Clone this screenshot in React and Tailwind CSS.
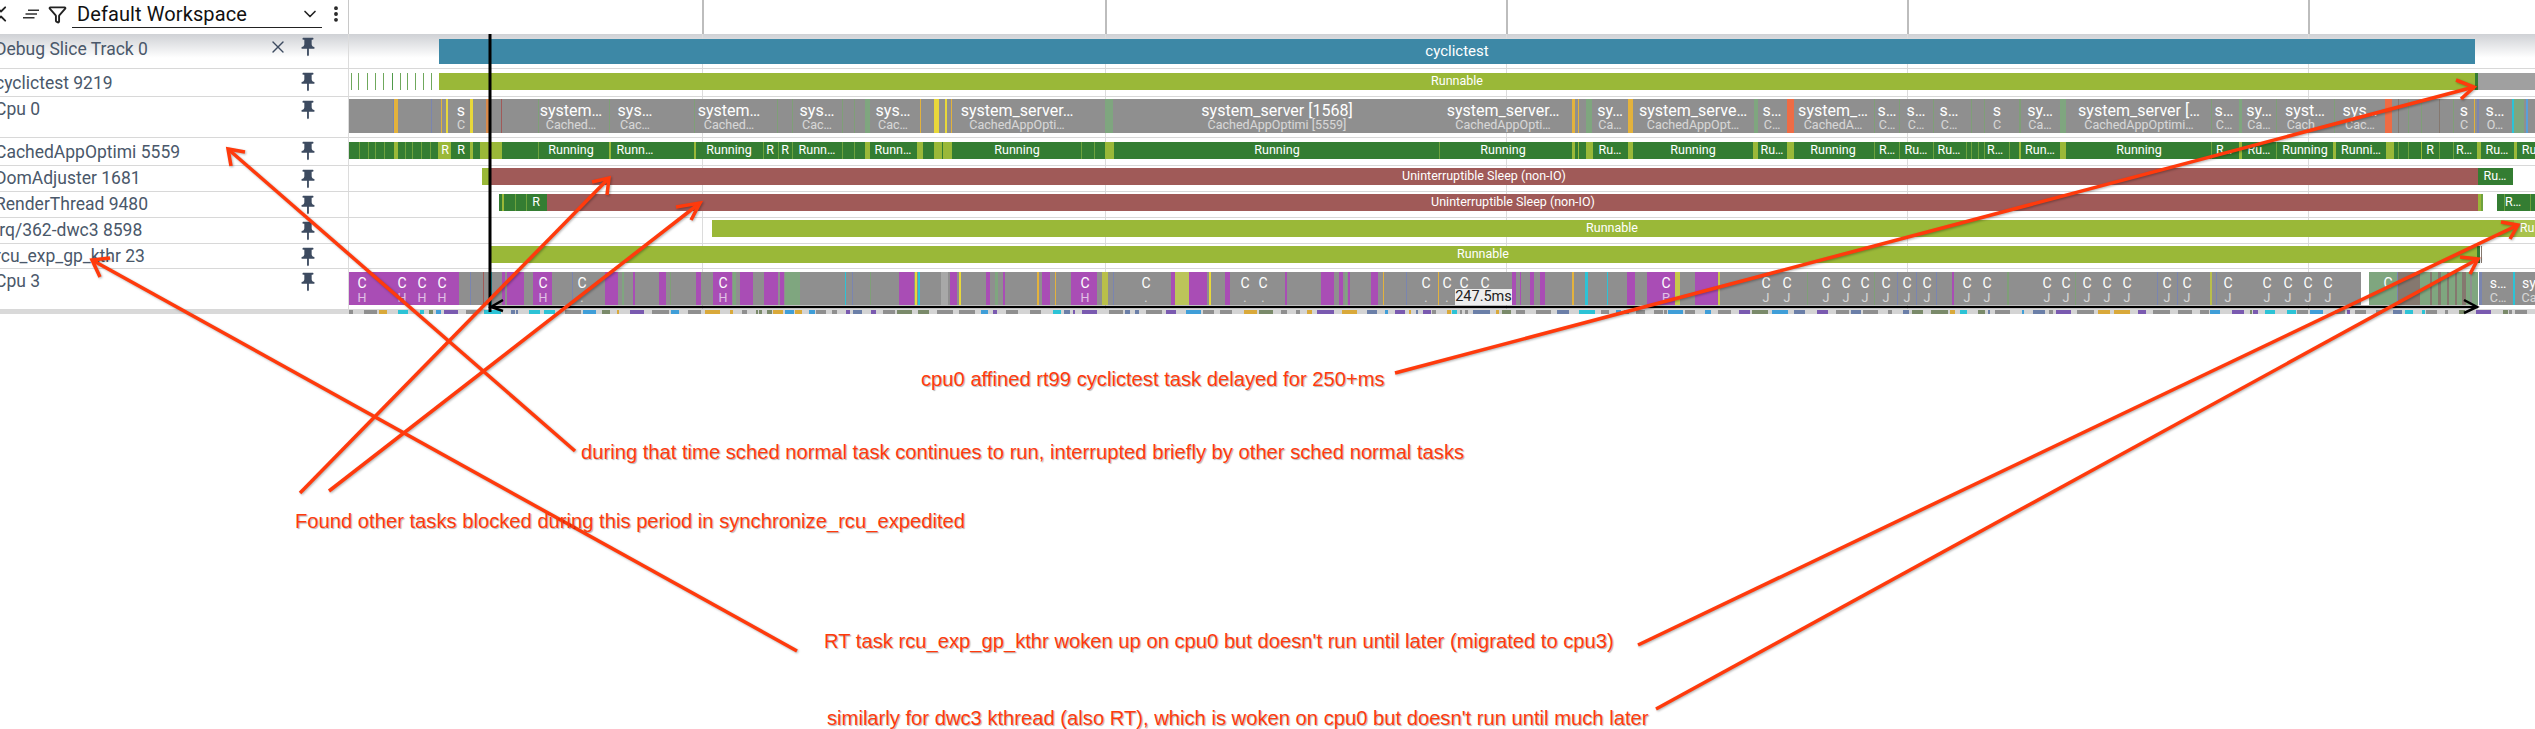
import React from 'react';
import { X, Filter, ChevronDown, ChevronsDownUp, EllipsisVertical } from 'lucide-react';

const LEFT = 349;
const TICKS = [702, 1105, 1506, 1907, 2308];

const OLIVE = '#9ab838';
const GREEN = '#347d32';
const RED = '#a05a58';
const BLUE = '#3d88a6';
const GREY = '#8f8f8f';
const PURPLE = '#a94db5';
const MUTED = '#7fa67f';
const ORANGE = '#e3b23c';
const YELLOW = '#e8d83a';
const THIN = '#7f9f78';
const SLATE = '#7a85b0';
const CORAL = '#ee6c45';
const CYAN = '#2cc3d6';
const BROWN = '#85786f';
const SEP = '#6ea23e';

// [x0, x1, colour], all in page pixels
const cpu0Marks = [
  [349, 2535, GREY], [393, 394, SLATE], [394, 398, ORANGE], [431, 432, SLATE], [441, 442, ORANGE], [446, 448, YELLOW],
  [470, 473, YELLOW], [486, 489, '#d98a4a'], [501, 502, RED], [538, 539, THIN], [609, 610, THIN], [694, 695, THIN],
  [777, 778, THIN], [792, 793, THIN], [842, 843, THIN], [854, 855, THIN], [865, 870, MUTED], [920, 921, ORANGE],
  [934, 939, YELLOW], [945, 947, YELLOW], [951, 952, ORANGE], [1105, 1113, MUTED], [1572, 1575, ORANGE],
  [1578, 1579, ORANGE], [1586, 1592, MUTED], [1628, 1633, ORANGE], [1754, 1758, MUTED], [1787, 1794, CORAL],
  [1874, 1875, THIN], [1899, 1900, THIN], [1933, 1934, THIN], [1971, 1972, THIN], [1984, 1985, THIN], [2019, 2021, THIN],
  [2060, 2066, MUTED], [2211, 2212, THIN], [2239, 2242, MUTED], [2276, 2277, THIN], [2334, 2335, THIN], [2385, 2392, CORAL],
  [2398, 2399, BROWN], [2408, 2409, THIN], [2421, 2422, THIN], [2439, 2440, BROWN], [2453, 2454, THIN], [2474, 2475, ORANGE],
  [2477, 2479, SLATE], [2512, 2514, CYAN], [2514, 2524, MUTED], [2526, 2528, '#5a9fd8'],
];

const cpu0Labels = [
  [461, 's', 'C'], [571, 'system…', 'Cached…'], [635, 'sys…', 'Cac…'], [729, 'system…', 'Cached…'], [817, 'sys…', 'Cac…'],
  [893, 'sys…', 'Cac…'], [1017, 'system_server…', 'CachedAppOpti…'], [1277, 'system_server [1568]', 'CachedAppOptimi [5559]'],
  [1503, 'system_server…', 'CachedAppOpti…'], [1610, 'sy…', 'Ca…'], [1693, 'system_serve…', 'CachedAppOpt…'], [1772, 's…', 'C…'],
  [1833, 'system_…', 'CachedA…'], [1887, 's…', 'C…'], [1916, 's…', 'C…'], [1949, 's…', 'C…'], [1997, 's', 'C'], [2040, 'sy…', 'Ca…'],
  [2139, 'system_server […', 'CachedAppOptimi…'], [2224, 's…', 'C…'], [2259, 'sy…', 'Ca…'], [2305, 'syst…', 'Cach…'],
  [2360, 'sys…', 'Cac…'], [2464, 's', 'C'], [2495, 's…', 'O…'],
];

const cachedMarks = [
  [349, 2535, GREEN], [359, 360, SEP], [368, 369, SEP], [375, 376, SEP], [384, 385, SEP], [394, 398, OLIVE], [405, 406, SEP],
  [412, 413, SEP], [421, 422, SEP], [430, 431, SEP], [438, 451, OLIVE], [470, 473, OLIVE], [480, 502, OLIVE], [538, 539, SEP],
  [609, 611, OLIVE], [694, 696, OLIVE], [763, 764, SEP], [778, 779, SEP], [792, 793, SEP], [842, 843, SEP], [854, 855, SEP],
  [865, 870, OLIVE], [917, 923, OLIVE], [934, 942, OLIVE], [943, 952, OLIVE], [1081, 1082, SEP], [1094, 1095, SEP], [1105, 1114, OLIVE],
  [1439, 1440, SEP], [1572, 1575, OLIVE], [1578, 1579, OLIVE], [1586, 1593, OLIVE], [1628, 1633, OLIVE], [1753, 1758, OLIVE],
  [1787, 1794, OLIVE], [1874, 1875, SEP], [1899, 1900, SEP], [1933, 1934, SEP], [1966, 1967, SEP], [1971, 1972, SEP], [1978, 1979, SEP],
  [1984, 1985, SEP], [2009, 2010, SEP], [2019, 2021, OLIVE], [2060, 2066, OLIVE], [2211, 2212, SEP], [2239, 2242, OLIVE],
  [2276, 2277, SEP], [2333, 2336, OLIVE], [2386, 2394, OLIVE], [2398, 2399, SEP], [2408, 2409, SEP], [2421, 2422, OLIVE],
  [2439, 2440, SEP], [2453, 2454, SEP], [2477, 2481, OLIVE], [2514, 2517, OLIVE],
];

const cachedLabels = [
  [445, 'R'], [461, 'R'], [571, 'Running'], [635, 'Runn…'], [729, 'Running'], [770, 'R'], [785, 'R'], [817, 'Runn…'], [893, 'Runn…'],
  [1017, 'Running'], [1277, 'Running'], [1503, 'Running'], [1610, 'Ru…'], [1693, 'Running'], [1772, 'Ru…'], [1833, 'Running'],
  [1887, 'R…'], [1916, 'Ru…'], [1949, 'Ru…'], [1995, 'R…'], [2040, 'Run…'], [2139, 'Running'], [2224, 'R…'], [2259, 'Ru…'],
  [2305, 'Running'], [2361, 'Runni…'], [2430, 'R'], [2464, 'R…'], [2497, 'Ru…'], [2529, 'Ru'],
];

const cpu3Marks = [
  [349, 2361, GREY], [349, 459, PURPLE], [470, 471, SLATE], [483, 484, RED], [490, 492, CYAN], [502, 505, PURPLE], [507, 524, PURPLE],
  [533, 552, PURPLE], [572, 573, SLATE], [605, 618, PURPLE], [622, 624, MUTED], [633, 635, PURPLE], [659, 666, PURPLE], [670, 671, THIN],
  [696, 701, PURPLE], [713, 732, PURPLE], [733, 736, MUTED], [740, 753, PURPLE], [764, 778, PURPLE], [780, 784, PURPLE], [785, 800, MUTED],
  [845, 846, CYAN], [852, 853, SLATE], [870, 871, THIN], [899, 914, PURPLE], [915, 917, YELLOW], [918, 920, CYAN], [941, 948, '#a8a8a8'],
  [950, 957, PURPLE], [959, 961, YELLOW], [986, 990, PURPLE], [995, 998, MUTED], [1003, 1005, PURPLE], [1037, 1039, ORANGE],
  [1042, 1050, PURPLE], [1055, 1056, ORANGE], [1071, 1097, PURPLE], [1102, 1108, '#b9bf4a'], [1113, 1114, SLATE], [1171, 1175, PURPLE],
  [1175, 1189, '#bcc55a'], [1189, 1207, PURPLE], [1209, 1211, YELLOW], [1225, 1230, PURPLE], [1285, 1287, PURPLE], [1321, 1334, PURPLE],
  [1339, 1343, PURPLE], [1345, 1347, MUTED], [1348, 1350, PURPLE], [1371, 1378, PURPLE], [1383, 1384, ORANGE], [1406, 1407, SLATE],
  [1438, 1439, ORANGE], [1512, 1516, PURPLE], [1520, 1521, PURPLE], [1530, 1534, PURPLE], [1540, 1545, PURPLE], [1572, 1574, ORANGE],
  [1585, 1588, CYAN], [1607, 1608, CYAN], [1627, 1635, PURPLE], [1647, 1675, PURPLE], [1675, 1680, '#c6c94a'], [1695, 1718, PURPLE],
  [1718, 1720, '#c6c94a'], [1807, 1808, THIN], [1874, 1875, THIN], [1897, 1898, SLATE], [1916, 1917, SLATE], [1936, 1937, SLATE],
  [1952, 1954, PURPLE], [2007, 2009, THIN], [2075, 2076, THIN], [2157, 2158, SLATE], [2177, 2178, SLATE], [2210, 2212, '#b9bf4a'],
  [2216, 2217, SLATE],
  [2369, 2397, MUTED], [2397, 2398, SLATE], [2398, 2420, BROWN], [2420, 2478, MUTED], [2430, 2432, BROWN], [2438, 2441, BROWN],
  [2447, 2449, BROWN], [2455, 2457, BROWN], [2462, 2466, BROWN], [2470, 2472, GREY], [2479, 2482, SLATE], [2482, 2513, GREY],
  [2513, 2515, CYAN], [2515, 2535, GREY],
];

const cpu3Labels = [
  [362, 'C', 'H'], [402, 'C', 'H'], [422, 'C', 'H'], [442, 'C', 'H'], [543, 'C', 'H'], [582, 'C', '.'], [723, 'C', 'H'], [1085, 'C', 'H'],
  [1146, 'C', '.'], [1245, 'C', '.'], [1263, 'C', '.'], [1426, 'C', '.'], [1447, 'C', '.'], [1464, 'C', ''], [1485, 'C', ''], [1666, 'C', 'P'],
  [1766, 'C', 'J'], [1787, 'C', 'J'], [1826, 'C', 'J'], [1846, 'C', 'J'], [1865, 'C', 'J'], [1886, 'C', 'J'], [1907, 'C', 'J'], [1927, 'C', 'J'],
  [1967, 'C', 'J'], [1987, 'C', 'J'], [2047, 'C', 'J'], [2066, 'C', 'J'], [2087, 'C', 'J'], [2107, 'C', 'J'], [2127, 'C', 'J'], [2167, 'C', 'J'],
  [2187, 'C', 'J'], [2228, 'C', 'J'], [2267, 'C', 'J'], [2288, 'C', 'J'], [2308, 'C', 'J'], [2328, 'C', 'J'], [2388, 'C', ''],
  [2498, 's…', 'C…'], [2529, 'sy', 'Ca'],
];

const tickMarks = [351, 358, 367, 375, 383, 392, 400, 407, 415, 423, 431].map((x, i) => [x, x + 1, i === 5 ? '#4f9a4a' : '#6fa85c']);

const tracks = [
  { name: 'Debug Slice Track 0', h: 35, top: 5, bar: 25, textTop: 1, close: true, gradient: true,
    marks: [[439, 2475, BLUE]], labels: [[1457, 'cyclictest']], big: true },
  { name: 'cyclictest 9219', h: 28, top: 4, bar: 17, textTop: 0,
    marks: [...tickMarks, [439, 2475, OLIVE], [2475, 2478, GREEN], [2478, 2535, '#a0a0a0']], labels: [[1457, 'Runnable']] },
  { name: 'Cpu 0', h: 41, top: 2, bar: 34, textTop: -2, marks: cpu0Marks, stacked: cpu0Labels, mainSize: 'text-[16px]' },
  { name: 'CachedAppOptimi 5559', h: 28, top: 4, bar: 17, textTop: 0, marks: cachedMarks, labels: cachedLabels },
  { name: 'DomAdjuster 1681', h: 26, top: 2, bar: 17, textTop: -2,
    marks: [[482, 490, OLIVE], [490, 2478, RED], [2478, 2513, GREEN]], labels: [[1484, 'Uninterruptible Sleep (non-IO)'], [2495, 'Ru…']] },
  { name: 'RenderThread 9480', h: 26, top: 2, bar: 17, textTop: -2,
    marks: [[499, 547, GREEN], [502, 504, OLIVE], [515, 516, SEP], [526, 527, SEP], [547, 2478, RED], [2478, 2481, OLIVE], [2481, 2483, SEP],
      [2497, 2535, GREEN], [2504, 2505, SEP], [2530, 2531, SEP]],
    labels: [[536, 'R'], [1513, 'Uninterruptible Sleep (non-IO)'], [2513, 'R…']] },
  { name: 'irq/362-dwc3 8598', h: 26, top: 2, bar: 17, textTop: -2,
    marks: [[712, 2514, OLIVE], [2514, 2535, '#a9c24c']], labels: [[1612, 'Runnable'], [2527, 'Ru']] },
  { name: 'rcu_exp_gp_kthr 23', h: 25, top: 2, bar: 17, textTop: -2,
    marks: [[491, 2477, OLIVE], [2477, 2480, GREEN], [2481, 2482, BROWN]], labels: [[1483, 'Runnable']] },
  { name: 'Cpu 3', h: 41, top: 3, bar: 33, textTop: -2, marks: cpu3Marks, stacked: cpu3Labels, mainSize: 'text-[14px]' },
];

// rough colour noise of the overview strip under the tracks
const stripMarks = (() => {
  const colours = ['#8f8f8f', '#8f8f8f', '#8f8f8f', '#7a8a6a', '#3f9ed8', '#d9a93a', '#7a5ab0', '#2cc3d6', '#6b7fa8'];
  const out = [];
  let seed = 17;
  let x = LEFT;
  while (x < 2535) {
    seed = (seed * 137 + 59) % 1009;
    const w = 2 + (seed % 16);
    out.push([x, x + w, colours[seed % colours.length]]);
    x += w + 1 + ((seed >> 3) % 12);
  }
  return out;
})();

const PinIcon = () => (
  <svg viewBox="0 0 24 24" className="w-[22px] h-[22px] fill-[#3d4b60]">
    <path d="M16 9V4h1c.55 0 1-.45 1-1s-.45-1-1-1H7c-.55 0-1 .45-1 1s.45 1 1 1h1v5c0 1.66-1.34 3-3 3v2h5.97v7l1 1 1-1v-7H19v-2c-1.66 0-3-1.34-3-3z" />
  </svg>
);

const Mark = ({ m }) => (
  <div className="absolute top-0 bottom-0" style={{ left: m[0] - LEFT, width: m[1] - m[0], background: m[2] }} />
);

const Ticks = () => TICKS.map((x) => (
  <div key={x} className="absolute top-0 bottom-0 w-px bg-[#dcdcdc]" style={{ left: x - LEFT }} />
));

const TrackRow = ({ t }) => (
  <div className={`flex border-b border-[#d8d8d8] ${t.gradient ? 'bg-linear-to-b from-[#cfd1d5] to-white to-70%' : 'bg-white'}`} style={{ height: t.h }}>
    <div className="w-[349px] shrink-0 border-r border-[#dcdcdc] relative overflow-hidden flex items-start">
      <span className="ml-[-5px] text-[17.5px] leading-[26px] text-[#4a586a] whitespace-nowrap" style={{ marginTop: t.textTop + 1 }}>{t.name}</span>
      <div className="ml-auto mr-[29px] flex items-center gap-[9px] mt-[2px]">
        {t.close && <X size={20} strokeWidth={1.6} className="text-[#3d4b60]" />}
        <PinIcon />
      </div>
    </div>
    <div className="relative flex-1">
      <Ticks />
      <div className="absolute left-0 right-0" style={{ top: t.top, height: t.bar }}>
        {t.marks.map((m, i) => <Mark key={i} m={m} />)}
        {(t.labels || []).map(([x, text], i) => (
          <span key={i} className={`absolute top-0 bottom-0 flex items-center -translate-x-1/2 whitespace-nowrap text-white ${t.big ? 'text-[15px]' : 'text-[12.5px]'}`} style={{ left: x - LEFT }}>
            {text}
          </span>
        ))}
        {(t.stacked || []).map(([x, main, sub], i) => (
          <div key={i} className="absolute top-0 bottom-0 pt-[3px] flex flex-col items-center justify-center -translate-x-1/2 whitespace-nowrap" style={{ left: x - LEFT }}>
            <span className={`${t.mainSize} leading-[15px] text-white`}>{main}</span>
            <span className="text-[12.5px] leading-[14px] h-[14px] text-white/65">{sub}</span>
          </div>
        ))}
      </div>
    </div>
  </div>
);

const RED_LINE = '#ff3a0c';

const arrows = [
  { from: [1395, 373], tip: [2474, 87], a: [2456, 80], b: [2461, 99] },
  { from: [575, 451], tip: [228, 149], a: [245, 152], b: [231, 166] },
  { from: [300, 493], tip: [609, 178], a: [592, 182], b: [607, 195] },
  { from: [329, 491], tip: [700, 203], a: [676, 207], b: [691, 220] },
  { from: [797, 651], tip: [92, 260], a: [110, 258], b: [100, 277] },
  { from: [1638, 645], tip: [2518, 225], a: [2501, 222], b: [2510, 239] },
  { from: [1656, 709], tip: [2478, 259], a: [2460, 257], b: [2470, 274] },
];

const notes = [
  { x: 921, y: 379, text: 'cpu0 affined rt99 cyclictest task delayed for 250+ms' },
  { x: 581, y: 452, text: 'during that time sched normal task continues to run, interrupted briefly by other sched normal tasks' },
  { x: 295, y: 521, text: 'Found other tasks blocked during this period in synchronize_rcu_expedited' },
  { x: 824, y: 641, text: "RT task rcu_exp_gp_kthr woken up on cpu0 but doesn't run until later (migrated to cpu3)" },
  { x: 827, y: 718, text: "similarly for dwc3 kthread (also RT), which is woken on cpu0 but doesn't run until much later" },
];

const Annotations = () => (
  <>
    <svg className="absolute inset-0 w-full h-full pointer-events-none" viewBox="0 0 2535 729">
      <line x1="490" y1="34" x2="490" y2="312" stroke="#000" strokeWidth="3" />
      <line x1="490" y1="307" x2="2478" y2="307" stroke="#000" strokeWidth="2.5" />
      <path d="M503 300 L491 307 L503 311 M2464 300 L2477 307 L2464 313" fill="none" stroke="#000" strokeWidth="2.5" />
    </svg>
    <span className="absolute left-[1455px] top-[289px] h-[16px] w-[57px] bg-white/85 text-[14.5px] leading-[16px] text-[#222] text-center whitespace-nowrap">247.5ms</span>
    <svg className="absolute inset-0 w-full h-full pointer-events-none drop-shadow-[1px_1px_1px_rgba(0,0,0,0.3)]" viewBox="0 0 2535 729">
      {arrows.map((r, i) => (
        <g key={i} stroke={RED_LINE} strokeWidth="3.5" fill="none">
          <line x1={r.from[0]} y1={r.from[1]} x2={r.tip[0]} y2={r.tip[1]} />
          <path d={`M${r.a[0]} ${r.a[1]} L${r.tip[0]} ${r.tip[1]} L${r.b[0]} ${r.b[1]}`} />
        </g>
      ))}
    </svg>
    {notes.map((n) => (
      <span
        key={n.x}
        className="absolute -translate-y-1/2 font-['Liberation_Sans',Arial,sans-serif] text-[20.2px] text-[#ff3a0c] whitespace-nowrap [text-shadow:1px_1px_1px_rgba(0,0,0,0.3)]"
        style={{ left: n.x, top: n.y }}
      >
        {n.text}
      </span>
    ))}
  </>
);

export default function App() {
  return (
    <div className="relative w-[2535px] h-[729px] overflow-hidden bg-white font-['Roboto',sans-serif]">
      {/* barra superior */}
      <div className="flex h-[34px] bg-white">
        <div className="w-[349px] shrink-0 border-r border-[#c8c8c8] flex items-start pt-[0px] overflow-hidden text-[#222]">
          <div className="h-[28px] flex items-center">
            <ChevronsDownUp size={20} strokeWidth={2.2} className="ml-[-9px] shrink-0" />
            <svg viewBox="0 0 18 10" className="ml-[11px] w-[18px] h-[10px] shrink-0 stroke-[#333] fill-none" strokeWidth="1.6">
              <path d="M6 1.2 H17 M3.5 5 H15 M1 8.8 H12.5" />
            </svg>
            <Filter size={19} strokeWidth={2.4} className="ml-[8px] shrink-0" />
            <div className="ml-[5px] w-[250px] h-[28px] border-b border-[#222] flex items-center pl-[5px] pr-[2px] shrink-0">
              <span className="text-[20px] leading-[24px] tracking-[0.1px] text-[#111] whitespace-nowrap">Default Workspace</span>
              <ChevronDown size={20} strokeWidth={2} className="ml-auto" />
            </div>
            <EllipsisVertical size={20} strokeWidth={2.6} className="ml-[4px] shrink-0" />
          </div>
        </div>
        <div className="relative flex-1">
          {TICKS.map((x) => (
            <div key={x} className="absolute top-0 bottom-0 w-[2px] bg-[#bdbdbd]" style={{ left: x - LEFT }} />
          ))}
        </div>
      </div>

      {tracks.map((t) => <TrackRow key={t.name} t={t} />)}

      {/* overview */}
      <div className="flex h-[4px]">
        <div className="w-[349px] shrink-0 bg-[#d9d9d9]" />
        <div className="relative flex-1 bg-[#d4d4d4]">
          {stripMarks.map((m, i) => <Mark key={i} m={m} />)}
        </div>
      </div>

      <Annotations />
    </div>
  );
}
